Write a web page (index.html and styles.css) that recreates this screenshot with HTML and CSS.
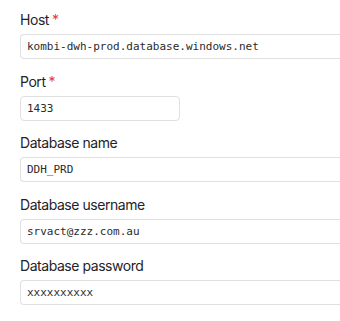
FILE: index.html
```html
<!DOCTYPE html>
<html lang="en">
<head>
    <meta charset="UTF-8">
    <meta name="viewport" content="width=device-width, initial-scale=1.0">
    <title>Connection settings</title>
    <link rel="stylesheet" href="styles.css">
</head>
<body>
    <form class="conn-form">
        <div class="field">
            <label class="field-label">Host<span class="req">*</span></label>
            <input class="field-input" type="text" value="kombi-dwh-prod.database.windows.net">
        </div>
        <div class="field">
            <label class="field-label">Port<span class="req">*</span></label>
            <input class="field-input short" type="text" value="1433">
        </div>
        <div class="field">
            <label class="field-label">Database name</label>
            <input class="field-input" type="text" value="DDH_PRD">
        </div>
        <div class="field">
            <label class="field-label">Database username</label>
            <input class="field-input" type="text" value="srvact@zzz.com.au">
        </div>
        <div class="field">
            <label class="field-label">Database password</label>
            <input class="field-input" type="text" value="xxxxxxxxxx">
        </div>
    </form>
</body>
</html>
```

FILE: styles.css
```css
* {
    margin: 0;
    padding: 0;
    box-sizing: border-box;
}

body {
    font-family: 'Inter', sans-serif;
    background: #fff;
    color: #1f2328;
    overflow: hidden;
}

.conn-form {
    width: 100%;
    padding: 10px 0 0 20px;
    display: flex;
    flex-direction: column;
    gap: 12.5px;
}

.field {
    display: flex;
    flex-direction: column;
    gap: 4px;
}

.field-label {
    font-size: 14px;
    line-height: 20px;
    font-weight: 400;
    letter-spacing: -0.45px;
}

.req {
    color: #e5393a;
    margin-left: 3px;
}

.field-input {
    width: 100%;
    height: 25px;
    padding: 0 6px;
    border: 1px solid #e0e0e0;
    border-right: none;
    border-radius: 4px 0 0 4px;
    background: #fff;
    font-family: 'DejaVu Sans Mono', monospace;
    font-size: 11px;
    color: #2b2b2b;
    outline: none;
}

.field-input.short {
    width: 160px;
    border-right: 1px solid #e0e0e0;
    border-radius: 4px;
}
```
